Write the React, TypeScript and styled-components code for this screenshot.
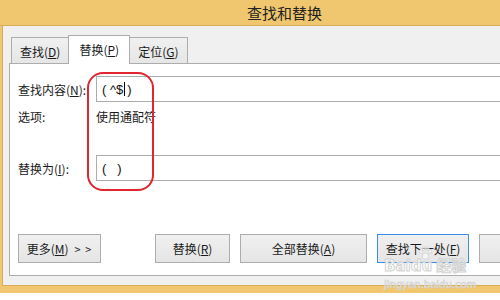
import React from "react";
import styled, { createGlobalStyle } from "styled-components";

const GlobalStyle = createGlobalStyle`
  html, body {
    margin: 0;
    padding: 0;
    width: 500px;
    height: 300px;
    overflow: hidden;
    background: #ffffff;
  }
  body {
    font-family: "Microsoft YaHei", "Noto Sans CJK SC", "Noto Sans", sans-serif;
    color: #1a1a1a;
  }
`;

const Window = styled.div`
  position: relative;
  width: 569px;
  height: 293px;
  display: flex;
  flex-direction: column;
  background: #f0c76e;
  padding: 0 0 7px 2px;
  box-sizing: border-box;
`;

const TitleBar = styled.div`
  height: 26px;
  margin-left: -2px;
  box-sizing: border-box;
  border-bottom: 1px solid #d6ac58;
  display: flex;
  align-items: center;
  justify-content: center;
  font-size: 15px;
  color: #222;
  padding-bottom: 1px;
`;

const Body = styled.div`
  flex: 1;
  display: flex;
  flex-direction: column;
  background: #f0f0f0;
  border-left: 1px solid #d6ac58;
  border-bottom: 1px solid #d6ac58;
  padding: 9px 0 9px 6px;
  box-sizing: border-box;
`;

const TabRow = styled.div`
  display: flex;
  align-items: flex-end;
  height: 29px;
  padding-left: 2px;
  margin-bottom: -1px;
  position: relative;
  z-index: 1;
`;

const Tab = styled.div<{ $active?: boolean }>`
  box-sizing: border-box;
  height: ${(p) => (p.$active ? 29 : 27)}px;
  padding: ${(p) => (p.$active ? "0 10px 2px" : "2px 8px 0")};
  margin-left: ${(p) => (p.$active ? -1 : 0)}px;
  margin-right: ${(p) => (p.$active ? -1 : 0)}px;
  border: 1px solid #adadad;
  border-bottom: ${(p) => (p.$active ? "none" : "1px solid #adadad")};
  background: ${(p) => (p.$active ? "#ffffff" : "linear-gradient(#f0f0f0, #e6e6e6)")};
  position: relative;
  z-index: ${(p) => (p.$active ? 2 : 1)};
  display: flex;
  align-items: center;
  font-size: 12px;
  white-space: nowrap;
`;

const Panel = styled.div`
  flex: 1;
  display: flex;
  flex-direction: column;
  background: #ffffff;
  border: 1px solid #adadad;
  border-right: none;
  padding: 12px 0 12px 8px;
  box-sizing: border-box;
`;

const FieldRow = styled.div<{ $top: number; $height: number }>`
  display: grid;
  grid-template-columns: 78px 1fr;
  align-items: center;
  margin-top: ${(p) => p.$top}px;
  height: ${(p) => p.$height}px;
  font-size: 12px;
`;

const Label = styled.span`
  white-space: nowrap;
`;

const Input = styled.div`
  height: 26px;
  box-sizing: border-box;
  border: 1px solid #adadad;
  margin-right: 8px;
  padding-left: 5px;
  display: flex;
  align-items: center;
  font-family: "Liberation Sans", Arial, sans-serif;
  font-size: 13px;
  color: #111;
  white-space: pre;
`;

const Caret = styled.span`
  display: inline-block;
  width: 1px;
  height: 14px;
  background: #000;
  margin: 0 2px 0 1px;
`;

const ButtonRow = styled.div`
  margin-top: auto;
  display: flex;
  gap: 10px;
`;

const Button = styled.div<{ $w: number; $focus?: boolean; $gapBefore?: number }>`
  box-sizing: border-box;
  width: ${(p) => p.$w}px;
  height: 29px;
  margin-left: ${(p) => p.$gapBefore ?? 0}px;
  border: 1px solid ${(p) => (p.$focus ? "#3d8ee8" : "#adadad")};
  background: linear-gradient(#f0f0f0, #e5e5e5);
  display: flex;
  align-items: center;
  justify-content: center;
  font-size: 12px;
  white-space: nowrap;
  flex-shrink: 0;
`;

const Arrows = styled.span`
  font-size: 11px;
  margin-left: 6px;
  letter-spacing: 1px;
`;

const Acc = styled.u`
  text-underline-offset: 1px;
`;

const Annotation = styled.div`
  position: absolute;
  left: 87px;
  top: 72px;
  width: 67px;
  height: 119px;
  box-sizing: border-box;
  border: 2px solid #e2252e;
  border-radius: 16px;
  pointer-events: none;
`;

const Watermark = styled.div`
  position: absolute;
  left: 384px;
  top: 256px;
  width: 90px;
  pointer-events: none;
  z-index: 5;
`;

const MarkTitle = styled.div`
  position: relative;
  font-family: "DejaVu Sans", "Noto Sans CJK SC", sans-serif;
  font-weight: bold;
  font-size: 15px;
  line-height: 17px;
  color: rgba(255, 255, 255, 0.75);
  -webkit-text-stroke: 1px #d2d2d2;
  white-space: nowrap;
`;

const MarkCjk = styled.span`
  margin-left: 4px;
  font-family: "Noto Sans CJK SC", sans-serif;
  font-size: 15px;
`;

const MarkUrl = styled.div`
  font-family: "DejaVu Sans", sans-serif;
  font-size: 10px;
  line-height: 12px;
  margin-top: 4px;
  color: rgba(255, 255, 255, 0.8);
  -webkit-text-stroke: 0.6px #cfcfcf;
  white-space: nowrap;
`;

const PawBox = styled.span`
  position: absolute;
  left: 34px;
  top: -10px;
`;

const Paw = () => (
  <PawBox>
    <svg width="15" height="14" viewBox="0 0 16 15">
      <g fill="rgba(255,255,255,0.6)" stroke="#d2d2d2" strokeWidth="1">
        <ellipse cx="3" cy="6" rx="1.7" ry="2.1" />
        <ellipse cx="6" cy="2.8" rx="1.7" ry="2.1" />
        <ellipse cx="10" cy="2.8" rx="1.7" ry="2.1" />
        <ellipse cx="13" cy="6" rx="1.7" ry="2.1" />
        <path d="M8 7.5 C5 7.5 4 11.5 5 13 C6 14.5 10 14.5 11 13 C12 11.5 11 7.5 8 7.5 Z" />
      </g>
    </svg>
  </PawBox>
);

export default function App() {
  return (
    <>
      <GlobalStyle />
      <Window>
        <TitleBar>查找和替换</TitleBar>
        <Body>
          <TabRow>
            <Tab>
              查找(<Acc>D</Acc>)
            </Tab>
            <Tab $active>
              替换(<Acc>P</Acc>)
            </Tab>
            <Tab>
              定位(<Acc>G</Acc>)
            </Tab>
          </TabRow>
          <Panel>
            <FieldRow $top={0} $height={26}>
              <Label>
                查找内容(<Acc>N</Acc>):
              </Label>
              <Input>
                {"( ^$"}
                <Caret />
                {")"}
              </Input>
            </FieldRow>
            <FieldRow $top={6} $height={16}>
              <Label>选项:</Label>
              <span>使用通配符</span>
            </FieldRow>
            <FieldRow $top={31} $height={26}>
              <Label>
                替换为(<Acc>I</Acc>):
              </Label>
              <Input>{"(   )"}</Input>
            </FieldRow>
            <ButtonRow>
              <Button $w={83}>
                更多(<Acc>M</Acc>)<Arrows>&gt; &gt;</Arrows>
              </Button>
              <Button $w={75} $gapBefore={44}>
                替换(<Acc>R</Acc>)
              </Button>
              <Button $w={127}>
                全部替换(<Acc>A</Acc>)
              </Button>
              <Button $w={92} $focus>
                查找下一处(<Acc>F</Acc>)
              </Button>
              <Button $w={80} />
            </ButtonRow>
          </Panel>
        </Body>
        <Annotation />
        <Watermark>
          <MarkTitle>
            Baidu
            <MarkCjk>经验</MarkCjk>
            <Paw />
          </MarkTitle>
          <MarkUrl>jingyan.baidu.com</MarkUrl>
        </Watermark>
      </Window>
    </>
  );
}
